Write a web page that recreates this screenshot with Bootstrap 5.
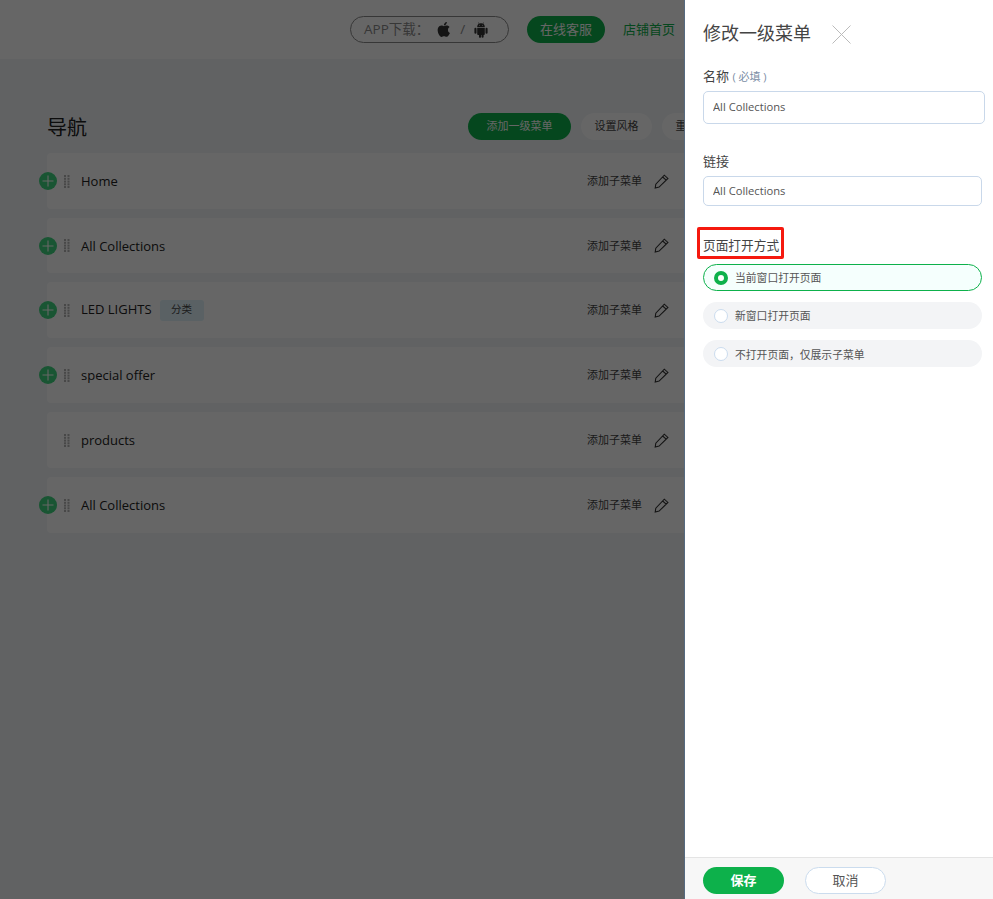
<!DOCTYPE html>
<html lang="zh">
<head>
<meta charset="utf-8">
<title>导航</title>
<link href="https://cdn.jsdelivr.net/npm/bootstrap@5.3.0/dist/css/bootstrap.min.css" rel="stylesheet">
<style>
html,body{height:100%;}
body{background:#f2f5f8;font-family:"Open Sans","Noto Sans CJK SC",sans-serif;color:#333;overflow:hidden;position:relative;width:993px;height:899px;}
.top-strip{height:59px;background:#fff;padding-right:308px;}
.app-pill{width:159px;height:27px;border:1px solid #8a8a8a;border-radius:14px;color:#8a8a8a;font-size:13.5px;padding-left:13px;}
.app-pill .slash{margin:0 9px 0 8px;}
.apple-ic{margin-left:8px;}
.svc-pill{width:78px;height:27px;background:#0db14b;border-radius:14px;color:#fff;font-size:13px;margin-left:18px;}
.home-link{color:#0db14b;font-size:13px;margin-left:18px;width:62px;white-space:nowrap;}
.main-area{padding:0 0 0 47px;}
.head-row{height:94px;padding-top:54px;}
.page-title{font-size:20px;color:#222;font-weight:400;margin:1px 0 0;line-height:27px;width:40px;flex:none;}
.tool-bar{margin-left:381px;flex:none;}
.tool-btn{height:27px;border-radius:14px;font-size:11px;background:#fff;color:#444;display:flex;align-items:center;justify-content:center;border:0;padding:0;flex:none;}
.tool-add{width:103px;background:#0db14b;color:#fff;}
.tool-style{width:71px;margin-left:10px;}
.tool-reset{width:71px;margin-left:10px;}
.nav-item-row{height:56px;background:#fff;border-radius:4px;margin-bottom:9px;position:relative;width:660px;font-size:13px;color:#222;}
.nav-item-row.slim{height:55px;}
.plus-dot{position:absolute;left:-8px;top:19px;width:18px;height:18px;}
.grip{width:6px;height:13px;margin-left:17px;margin-right:11px;flex:none;}
.row-label{line-height:20px;}
.label-up{margin-bottom:2px;}
.sub-link{font-size:11px;color:#444;line-height:16px;white-space:nowrap;margin-left:auto;margin-right:12px;}
.pen{width:15px;height:15px;margin-right:38px;flex:none;}
.cat-tag{font-size:10.5px;background:#e0f3fb;border-radius:3px;width:44px;height:21px;display:inline-flex;align-items:center;justify-content:center;margin-left:8px;color:#444;}
.dim-layer{position:absolute;inset:0;background:rgba(0,0,0,.6);}
.side-panel{position:absolute;left:685px;top:0;width:308px;height:899px;background:#fff;display:flex;flex-direction:column;box-shadow:-1px 0 0 #566a80;}
.panel-body{flex:1;padding:0 11px 0 18px;}
.panel-title{font-size:18px;line-height:24px;color:#444;font-weight:400;margin:0;}
.panel-head{height:67px;padding-top:21px;}
.x-mark{width:19px;height:19px;margin-left:21px;margin-top:4px;}
.fld-label{font-size:13px;color:#444;line-height:18px;height:18px;margin:0 0 6px;display:block;}
.fld-label em{font-style:normal;font-size:11px;color:#7b8ea5;}
.fld-input.form-control{font-size:11.2px;color:#555;height:33px;width:282px;border:1px solid #c9d8ea;border-radius:5px;padding:0 9px 2px;box-shadow:none;}
.fld-input.gap-after{margin-bottom:28px;}
.fld-input.short{height:30px;width:279px;}
.mark-wrap{margin-top:21px;margin-bottom:5px;}
.choice{width:279px;height:27px;border-radius:14px;background:#f3f4f6;display:flex;align-items:center;font-size:10.8px;color:#555;margin-bottom:11px;padding-left:11px;}
.choice.on{background:#f5fffd;border:1px solid #0db14b;padding-left:10px;}
.choice-text{margin-top:2px;}
.tick{width:14px;height:14px;border-radius:50%;background:#fff;border:1px solid #cbdcee;margin-right:7px;flex:none;}
.choice.on .tick{border:4px solid #0db14b;}
.comma-tc{font-family:"Noto Sans CJK TC",sans-serif;}
.mark-box{border:3px solid #f5190f;border-radius:2px;padding:5px 2px 1px 3px;margin-left:-6px;font-size:12.7px;line-height:20px;color:#444;}
.panel-foot{height:42px;background:#f7f7f7;border-top:1px solid #e4e4e4;padding:9px 0 0 18px;}
.save-btn{width:81px;height:27px;border-radius:14px;background:#0db14b;color:#fff;font-size:13px;font-weight:600;border:0;padding:0;}
.cancel-btn{width:81px;height:27px;border-radius:14px;background:#fff;color:#555;font-size:13px;border:1px solid #cbdcee;padding:0;margin-left:21px;}
</style>
</head>
<body>
<svg width="0" height="0" class="position-absolute">
  <defs>
    <g id="grip-dots" fill="#b5b5b5">
      <rect x="0" y="0" width="2" height="2"/><rect x="3.500" y="0" width="2" height="2"/>
      <rect x="0" y="2.800" width="2" height="2"/><rect x="3.500" y="2.800" width="2" height="2"/>
      <rect x="0" y="5.600" width="2" height="2"/><rect x="3.500" y="5.600" width="2" height="2"/>
      <rect x="0" y="8.300" width="2" height="2"/><rect x="3.500" y="8.300" width="2" height="2"/>
      <rect x="0" y="11" width="2" height="2"/><rect x="3.500" y="11" width="2" height="2"/>
    </g>
    <g id="plus-mark"><circle cx="9" cy="9" r="9" fill="#3fd47f"/><path d="M9 3.500v11M3.500 9h11" stroke="#fff" stroke-width="1.100"/></g>
    <g id="pen-mark" fill="none" stroke="#333" stroke-width="1.100"><path d="M1.200 14l.6-3.800L10.300 1.200l3.600 3.200-8.800 8.700zM8.600 3l3.600 3.200"/></g>
  </defs>
</svg>
<div class="top-strip d-flex align-items-center justify-content-end">
  <div class="app-pill d-flex align-items-center">
    <span>APP下载：</span>
    <svg class="apple-ic" width="15" height="17" viewBox="0 0 24 26" fill="#333"><path d="M17.500 13.600c0-3 2.500-4.400 2.600-4.500-1.400-2.100-3.600-2.400-4.400-2.400-1.900-.2-3.600 1.100-4.600 1.100s-2.400-1.100-4-1.100C5 6.800 3 8 2 9.800c-2.100 3.700-.5 9.100 1.500 12 1 1.500 2.200 3.100 3.800 3 1.500-.1 2.100-1 3.900-1s2.400 1 4 .9c1.700 0 2.700-1.500 3.700-2.900 1.200-1.700 1.600-3.300 1.700-3.400-.1-.1-3.100-1.200-3.100-4.800zM14.500 4.700c.8-1 1.400-2.400 1.200-3.700-1.200 0-2.600.8-3.500 1.800-.8.900-1.400 2.300-1.200 3.600 1.300.1 2.700-.7 3.500-1.700z"/></svg>
    <span class="slash">/</span>
    <svg width="14" height="16" viewBox="0 0 24 27" fill="#333"><path d="M2.500 9.500a1.800 1.800 0 0 0-1.800 1.800v7a1.800 1.800 0 0 0 3.600 0v-7a1.800 1.800 0 0 0-1.800-1.800zm19 0a1.800 1.800 0 0 0-1.800 1.800v7a1.800 1.800 0 0 0 3.600 0v-7a1.800 1.800 0 0 0-1.800-1.800zM5.500 9.500v11a1.500 1.500 0 0 0 1.500 1.500h1.500v3.200a1.800 1.800 0 0 0 3.600 0V22h.8v3.200a1.800 1.800 0 0 0 3.600 0V22H17a1.500 1.500 0 0 0 1.500-1.500v-11zM15.700 2.800l1.400-2.200-.5-.4-1.500 2.300A8 8 0 0 0 12 2a8 8 0 0 0-3.100.5L7.400.2l-.5.400 1.400 2.200C6.500 3.800 5.500 5.700 5.500 8.500h13c0-2.800-1-4.700-2.800-5.700zM9.300 6.200a.8.800 0 1 1 0-1.600.8.800 0 0 1 0 1.600zm5.400 0a.8.800 0 1 1 0-1.600.8.800 0 0 1 0 1.600z"/></svg>
  </div>
  <div class="svc-pill d-flex align-items-center justify-content-center">在线客服</div>
  <div class="home-link">店铺首页</div>
</div>
<div class="main-area">
  <div class="head-row d-flex align-items-start">
    <h1 class="page-title">导航</h1>
    <div class="tool-bar d-flex">
      <button class="tool-btn tool-add">添加一级菜单</button>
      <button class="tool-btn tool-style">设置风格</button>
      <button class="tool-btn tool-reset">重新排序</button>
    </div>
  </div>
  <div class="nav-item-row d-flex align-items-center">
    <svg class="plus-dot" viewBox="0 0 18 18"><use href="#plus-mark"/></svg>
    <svg class="grip" viewBox="0 0 6 13"><use href="#grip-dots"/></svg>
    <span class="row-label">Home</span>
    <span class="sub-link">添加子菜单</span>
    <svg class="pen" viewBox="0 0 15 15"><use href="#pen-mark"/></svg>
  </div>
  <div class="nav-item-row slim d-flex align-items-center">
    <svg class="plus-dot" viewBox="0 0 18 18"><use href="#plus-mark"/></svg>
    <svg class="grip" viewBox="0 0 6 13"><use href="#grip-dots"/></svg>
    <span class="row-label">All Collections</span>
    <span class="sub-link">添加子菜单</span>
    <svg class="pen" viewBox="0 0 15 15"><use href="#pen-mark"/></svg>
  </div>
  <div class="nav-item-row d-flex align-items-center">
    <svg class="plus-dot" viewBox="0 0 18 18"><use href="#plus-mark"/></svg>
    <svg class="grip" viewBox="0 0 6 13"><use href="#grip-dots"/></svg>
    <span class="row-label label-up">LED LIGHTS</span><span class="cat-tag">分类</span>
    <span class="sub-link">添加子菜单</span>
    <svg class="pen" viewBox="0 0 15 15"><use href="#pen-mark"/></svg>
  </div>
  <div class="nav-item-row d-flex align-items-center">
    <svg class="plus-dot" viewBox="0 0 18 18"><use href="#plus-mark"/></svg>
    <svg class="grip" viewBox="0 0 6 13"><use href="#grip-dots"/></svg>
    <span class="row-label">special offer</span>
    <span class="sub-link">添加子菜单</span>
    <svg class="pen" viewBox="0 0 15 15"><use href="#pen-mark"/></svg>
  </div>
  <div class="nav-item-row d-flex align-items-center">
    <svg class="grip" viewBox="0 0 6 13"><use href="#grip-dots"/></svg>
    <span class="row-label">products</span>
    <span class="sub-link">添加子菜单</span>
    <svg class="pen" viewBox="0 0 15 15"><use href="#pen-mark"/></svg>
  </div>
  <div class="nav-item-row d-flex align-items-center">
    <svg class="plus-dot" viewBox="0 0 18 18"><use href="#plus-mark"/></svg>
    <svg class="grip" viewBox="0 0 6 13"><use href="#grip-dots"/></svg>
    <span class="row-label">All Collections</span>
    <span class="sub-link">添加子菜单</span>
    <svg class="pen" viewBox="0 0 15 15"><use href="#pen-mark"/></svg>
  </div>
</div>
<div class="dim-layer"></div>
<aside class="side-panel">
  <div class="panel-body">
    <div class="panel-head d-flex align-items-start">
      <h2 class="panel-title">修改一级菜单</h2>
      <svg class="x-mark" viewBox="0 0 19 19" fill="none" stroke="#bbb"><path d="M.5.500l18 18M18.500.500l-18 18"/></svg>
    </div>
    <label class="fld-label">名称 <em>( 必填 )</em></label>
    <input class="form-control fld-input gap-after" value="All Collections">
    <label class="fld-label">链接</label>
    <input class="form-control fld-input short" value="All Collections">
    <div class="mark-wrap d-flex"><span class="mark-box">页面打开方式</span></div>
    <div class="choice on"><span class="tick"></span><span class="choice-text">当前窗口打开页面</span></div>
    <div class="choice"><span class="tick"></span><span class="choice-text">新窗口打开页面</span></div>
    <div class="choice"><span class="tick"></span><span class="choice-text">不打开页面<span class="comma-tc">，</span>仅展示子菜单</span></div>
  </div>
  <div class="panel-foot">
    <button class="save-btn">保存</button><button class="cancel-btn">取消</button>
  </div>
</aside>
</body>
</html>
